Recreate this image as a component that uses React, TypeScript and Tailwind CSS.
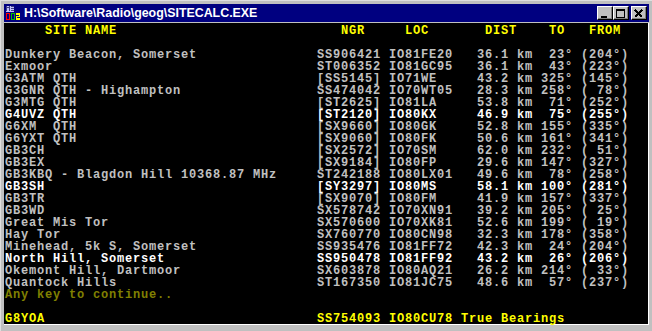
import React from "react";

type Site = { name: string; ngr: string; loc: string; dist: string; to: string; from: string; hi?: boolean };

const sites: Site[] = [
  { name: "Dunkery Beacon, Somerset", ngr: "SS906421", loc: "IO81FE20", dist: "36.1", to: "23", from: "204" },
  { name: "Exmoor", ngr: "ST006352", loc: "IO81GC95", dist: "36.1", to: "43", from: "223" },
  { name: "G3ATM QTH", ngr: "[SS5145]", loc: "IO71WE", dist: "43.2", to: "325", from: "145" },
  { name: "G3GNR QTH - Highampton", ngr: "SS474042", loc: "IO70WT05", dist: "28.3", to: "258", from: "78" },
  { name: "G3MTG QTH", ngr: "[ST2625]", loc: "IO81LA", dist: "53.8", to: "71", from: "252" },
  { name: "G4UVZ QTH", ngr: "[ST2120]", loc: "IO80KX", dist: "46.9", to: "75", from: "255", hi: true },
  { name: "G6XM  QTH", ngr: "[SX9660]", loc: "IO80GK", dist: "52.8", to: "155", from: "335" },
  { name: "G6YXT QTH", ngr: "[SX9060]", loc: "IO80FK", dist: "50.6", to: "161", from: "341" },
  { name: "GB3CH", ngr: "[SX2572]", loc: "IO70SM", dist: "62.0", to: "232", from: "51" },
  { name: "GB3EX", ngr: "[SX9184]", loc: "IO80FP", dist: "29.6", to: "147", from: "327" },
  { name: "GB3KBQ - Blagdon Hill 10368.87 MHz", ngr: "ST242188", loc: "IO80LX01", dist: "49.6", to: "78", from: "258" },
  { name: "GB3SH", ngr: "[SY3297]", loc: "IO80MS", dist: "58.1", to: "100", from: "281", hi: true },
  { name: "GB3TR", ngr: "[SX9070]", loc: "IO80FM", dist: "41.9", to: "157", from: "337" },
  { name: "GB3WD", ngr: "SX578742", loc: "IO70XN91", dist: "39.2", to: "205", from: "25" },
  { name: "Great Mis Tor", ngr: "SX570600", loc: "IO70XK81", dist: "52.6", to: "199", from: "19" },
  { name: "Hay Tor", ngr: "SX760770", loc: "IO80CN98", dist: "32.3", to: "178", from: "358" },
  { name: "Minehead, 5k S, Somerset", ngr: "SS935476", loc: "IO81FF72", dist: "42.3", to: "24", from: "204" },
  { name: "North Hill, Somerset", ngr: "SS950478", loc: "IO81FF92", dist: "43.2", to: "26", from: "206", hi: true },
  { name: "Okemont Hill, Dartmoor", ngr: "SX603878", loc: "IO80AQ21", dist: "26.2", to: "214", from: "33" },
  { name: "Quantock Hills", ngr: "ST167350", loc: "IO81JC75", dist: "48.6", to: "57", from: "237" },
];

function line(s: Site) {
  return (
    s.name.padEnd(39) +
    s.ngr.padEnd(9) +
    s.loc.padEnd(8) +
    s.dist.padStart(7) +
    " km" +
    s.to.padStart(4) +
    "° (" +
    s.from.padStart(3) +
    "°)"
  );
}

const header = "     SITE NAME".padEnd(42) + "NGR".padEnd(8) + "LOC".padEnd(10) + "DIST".padEnd(8) + "TO".padEnd(5) + "FROM";

function DosIcon() {
  return (
    <svg width="16" height="16" viewBox="0 0 16 16" className="shrink-0">
      <rect x="0" y="0" width="16" height="16" fill="#000080" />
      <rect x="1" y="1" width="8" height="6" fill="#c0c0ff" />
      <rect x="1" y="1" width="1" height="5" fill="#404080" />
      <rect x="4" y="1" width="1" height="5" fill="#404080" />
      <rect x="2" y="2" width="2" height="1" fill="#404080" />
      <rect x="6" y="1" width="3" height="1" fill="#404080" />
      <rect x="6" y="3" width="3" height="1" fill="#404080" />
      <rect x="6" y="5" width="3" height="1" fill="#404080" />
      <rect x="1" y="8" width="4" height="7" fill="#ff0000" />
      <rect x="2" y="9" width="2" height="5" fill="#000080" />
      <rect x="6" y="8" width="4" height="7" fill="#00c000" />
      <rect x="7" y="9" width="2" height="5" fill="#000080" />
      <rect x="11" y="8" width="4" height="7" fill="#ffff00" />
      <rect x="11" y="10" width="3" height="1" fill="#000080" />
      <rect x="12" y="12" width="3" height="1" fill="#000080" />
    </svg>
  );
}

function CaptionButton({ kind }: { kind: "min" | "max" | "close" }) {
  return (
    <div className="w-[16px] h-[14px] bg-[#c0c0c0] border-t border-l border-white border-r border-b border-r-black border-b-black shadow-[inset_-1px_-1px_0_#808080] flex items-center justify-center">
      <svg width="10" height="9" viewBox="0 0 10 9">
        {kind === "min" && <rect x="1" y="7" width="6" height="2" fill="#000" />}
        {kind === "max" && (
          <g fill="#000">
            <rect x="0" y="0" width="9" height="2" />
            <rect x="0" y="0" width="1" height="9" />
            <rect x="8" y="0" width="1" height="9" />
            <rect x="0" y="8" width="9" height="1" />
          </g>
        )}
        {kind === "close" && (
          <g stroke="#000" strokeWidth="1.6" shapeRendering="crispEdges">
            <path d="M1 1 L8 8 M8 1 L1 8" />
          </g>
        )}
      </svg>
    </div>
  );
}

export default function App() {
  return (
    <div className="w-[652px] h-[331px] bg-[#c0c0c0] border-t border-l border-[#dfdfdf] p-[3px] flex flex-col overflow-hidden">
      <div className="h-[18px] bg-[#000080] flex items-center pl-[1px] pr-[2px]">
        <DosIcon />
        <span className="ml-[3px] text-white font-bold text-[12.4px] leading-none font-['Liberation_Sans',Arial,sans-serif]">
          H:\Software\Radio\geog\SITECALC.EXE
        </span>
        <div className="ml-auto flex items-center">
          <CaptionButton kind="min" />
          <CaptionButton kind="max" />
          <div className="w-[2px]" />
          <CaptionButton kind="close" />
        </div>
      </div>
      <div className="mt-[1px] w-[645px] h-[302px] bg-black border-r border-b border-white">
        <pre className="pl-[1px] pt-[2px] font-['Liberation_Mono',monospace] font-bold text-[12px] tracking-[0.8px] leading-[12px] text-[#c0c0c0]">
          <div className="text-[#ffff00]">{header}</div>
          <div>{" "}</div>
          {sites.map((s) => (
            <div key={s.name} className={s.hi ? "text-white" : ""}>
              {line(s)}
            </div>
          ))}
          <div className="text-[#808000]">Any key to continue..</div>
          <div>{" "}</div>
          <div className="text-[#ffff00]">{"G8YOA".padEnd(39) + "SS754093 IO80CU78 True Bearings"}</div>
        </pre>
      </div>
    </div>
  );
}
